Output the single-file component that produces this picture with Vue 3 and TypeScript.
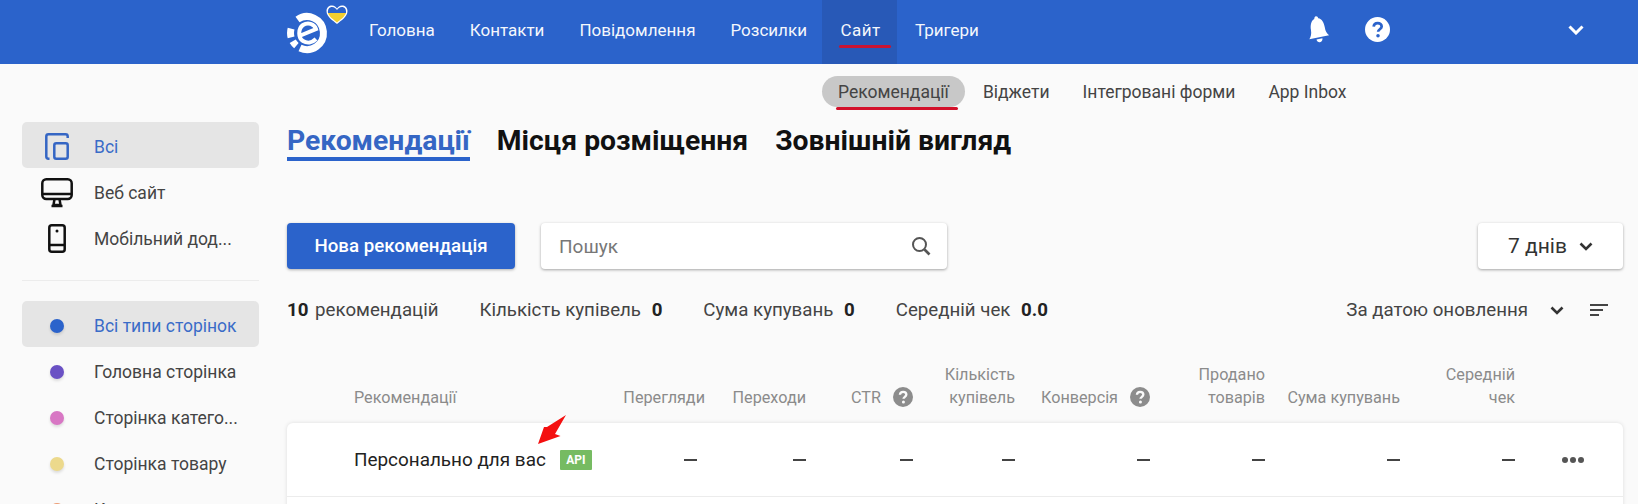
<script setup lang="ts">
const nav = ['Головна', 'Контакти', 'Повідомлення', 'Розсилки', 'Сайт', 'Тригери']
const sub = ['Рекомендації', 'Віджети', 'Інтегровані форми', 'App Inbox']
const pages = [
  { label: 'Всі типи сторінок', color: '#2b63cb', active: true },
  { label: 'Головна сторінка', color: '#6a51c4', active: false },
  { label: 'Сторінка катего...', color: '#d877c4', active: false },
  { label: 'Сторінка товару', color: '#ecd98c', active: false },
  { label: 'Кошик', color: '#ec9c74', active: false },
]
const cols = [
  { lines: ['Перегляди'], help: false },
  { lines: ['Переходи'], help: false },
  { lines: ['CTR'], help: true },
  { lines: ['Кількість', 'купівель'], help: false },
  { lines: ['Конверсія'], help: true },
  { lines: ['Продано', 'товарів'], help: false },
  { lines: ['Сума купувань'], help: false },
  { lines: ['Середній', 'чек'], help: false },
]
</script>

<template>
  <div class="page">
    <header class="top">
      <svg class="logo" width="63" height="64" viewBox="0 0 63 64">
        <g fill="none" stroke="#fff" stroke-width="7">
          <path d="M10.500 19.500 A16.500 16.500 0 1 1 13 48" />
          <path d="M4.100 28.700 A16.500 16.500 0 0 0 4.100 37.300" />
          <path d="M5.700 41.250 A16.500 16.500 0 0 0 9.400 45.600" />
        </g>
        <path d="M13.500 35.500 L29 29 C27.500 23.500 20.500 22 16 25 C11 28.500 11 38 16 41 C20 43.500 25 43 29 39" fill="none" stroke="#fff" stroke-width="4" />
        <path d="M50 24 C46 20.500 39.500 17 39.500 11 C39.500 7.500 42 5.500 45 5.500 C47.500 5.500 49 7 50 8.500 C51 7 52.500 5.500 55 5.500 C58 5.500 60.500 7.500 60.500 11 C60.500 17 54 20.500 50 24 Z" fill="#fff" />
        <path d="M41 13 C42 16.500 47 20 50 22.500 C53 20 58 16.500 59 13 Z" fill="#f3cf2f" />
        <path d="M41 13 C40.500 9 42.500 7 45 7 C47.500 7 49 8.500 50 10 C51 8.500 52.500 7 55 7 C57.500 7 59.500 9 59 13 Z" fill="#2b63cb" />
      </svg>
      <nav class="nav">
        <a v-for="n in nav" :key="n" class="nav-item" :class="{ on: n === 'Сайт' }">{{ n }}<i v-if="n === 'Сайт'" class="red-top"></i></a>
      </nav>
      <svg class="bell" width="24" height="29" viewBox="0 0 24 26" preserveAspectRatio="none">
        <g transform="rotate(-10 12 13)">
          <path d="M12 1 C13 1 14 2 14 3 C17.500 4 19 8 19 12 C19 16 20 18 22 20 L2 20 C4 18 5 16 5 12 C5 8 6.500 4 10 3 C10 2 11 1 12 1 Z" fill="#fff" />
          <path d="M9 21.500 H15 C15 23.500 13.500 24.500 12 24.500 C10.500 24.500 9 23.500 9 21.500 Z" fill="#fff" />
        </g>
      </svg>
      <svg class="help-top" width="25" height="25" viewBox="0 0 24 24">
        <circle cx="12" cy="12" r="12" fill="#fff" />
        <path d="M8.300 9.300 C8.500 7 10 5.800 12.200 5.800 C14.400 5.800 16 7.200 16 9.100 C16 11.700 12.600 11.800 12.600 14.200" fill="none" stroke="#2b63cb" stroke-width="2.600" />
        <circle cx="12.500" cy="18" r="1.700" fill="#2b63cb" />
      </svg>
      <svg class="chev-top" width="16" height="10" viewBox="0 0 16 10">
        <path d="M1.500 1.500 L8 8 L14.500 1.500" fill="none" stroke="#fff" stroke-width="3" />
      </svg>
    </header>

    <div class="subnav">
      <a v-for="s in sub" :key="s" class="sub-item" :class="{ on: s === 'Рекомендації' }">{{ s }}<i v-if="s === 'Рекомендації'" class="red-sub"></i></a>
    </div>

    <div class="body">
      <aside class="side">
        <div class="side-row active">
          <span class="ico">
            <svg width="24" height="27" viewBox="0 0 24 27" fill="none" stroke="#3566c4" stroke-width="2.500">
              <path d="M4.500 25.700 H3.500 C2.200 25.700 1.300 24.800 1.300 23.500 V3.500 C1.300 2.200 2.200 1.300 3.500 1.300 H20.500 C21.800 1.300 22.700 2.200 22.700 3.500 V5" />
              <rect x="9.300" y="10.300" width="13.400" height="15.400" rx="2" />
            </svg>
          </span>
          <span class="blue">Всі</span>
        </div>
        <div class="side-row">
          <span class="ico">
            <svg width="32" height="30" viewBox="0 0 32 30" fill="none" stroke="#111" stroke-width="2.500">
              <rect x="1.300" y="1.300" width="29.400" height="19.700" rx="4" />
              <path d="M1.500 16 H30.500" />
              <path d="M13.500 21 L12.500 27 H19.500 L18.500 21" />
              <path d="M10.500 28 H21.500" />
            </svg>
          </span>
          <span>Веб сайт</span>
        </div>
        <div class="side-row">
          <span class="ico">
            <svg width="18" height="29" viewBox="0 0 18 29" fill="none" stroke="#111" stroke-width="2.500">
              <rect x="1.300" y="1.300" width="15.400" height="26.400" rx="2.500" />
              <path d="M1 21 H17" />
              <circle cx="9" cy="7" r="1.500" fill="#111" stroke="none" />
            </svg>
          </span>
          <span>Мобільний дод...</span>
        </div>
        <div class="divider"></div>
        <div v-for="p in pages" :key="p.label" class="side-row" :class="{ active: p.active }">
          <span class="ico"><b class="dot" :style="{ background: p.color }"></b></span>
          <span :class="{ blue: p.active }">{{ p.label }}</span>
        </div>
      </aside>

      <main class="main">
        <div class="tabs">
          <span class="tab sel">Рекомендації</span>
          <span class="tab">Місця розміщення</span>
          <span class="tab">Зовнішній вигляд</span>
        </div>

        <div class="tools">
          <button class="btn">Нова рекомендація</button>
          <div class="search">
            <span>Пошук</span>
            <svg width="20" height="20" viewBox="0 0 20 20" fill="none" stroke="#555" stroke-width="2">
              <circle cx="8.500" cy="8.500" r="6.500" />
              <path d="M13.500 13.500 L18.500 18.500" stroke-width="2.600" />
            </svg>
          </div>
          <div class="range">
            <span>7 днів</span>
            <svg width="14" height="9" viewBox="0 0 14 9"><path d="M1.500 1.500 L7 7 L12.500 1.500" fill="none" stroke="#333" stroke-width="2.600" /></svg>
          </div>
        </div>

        <div class="stats">
          <span class="stat first"><b>10</b> рекомендацій</span>
          <span class="stat">Кількість купівель <b>0</b></span>
          <span class="stat">Сума купувань <b>0</b></span>
          <span class="stat">Середній чек <b>0.0</b></span>
          <span class="sort">
            <span>За датою оновлення</span>
            <svg width="14" height="9" viewBox="0 0 14 9"><path d="M1.500 1.500 L7 7 L12.500 1.500" fill="none" stroke="#333" stroke-width="2.600" /></svg>
            <svg width="18" height="13" viewBox="0 0 18 13" fill="#444"><rect width="18" height="2" /><rect y="5" width="13" height="2" /><rect y="10" width="9" height="2" /></svg>
          </span>
        </div>

        <div class="grid head">
          <div class="name-col">Рекомендації</div>
          <div v-for="c in cols" :key="c.lines[0]" class="hcell">
            <div class="hlines"><div v-for="l in c.lines" :key="l">{{ l }}</div></div>
            <svg v-if="c.help" class="help" width="20" height="20" viewBox="0 0 24 24">
              <circle cx="12" cy="12" r="12" fill="#8c8c8c" />
              <path d="M8.300 9.300 C8.500 7 10 5.800 12.200 5.800 C14.400 5.800 16 7.200 16 9.100 C16 11.700 12.600 11.800 12.600 14.200" fill="none" stroke="#fafafa" stroke-width="2.800" />
              <circle cx="12.500" cy="18" r="1.800" fill="#fafafa" />
            </svg>
          </div>
          <div></div>
        </div>

        <div class="card">
          <div class="grid row">
            <div class="name-col title">Персонально для вас <em class="api">API</em></div>
            <div v-for="c in cols" :key="c.lines[0]" class="dash"><i></i></div>
            <div class="dots"><i></i><i></i><i></i></div>
          </div>
          <svg class="arrow" width="34" height="32" viewBox="0 0 34 32">
            <path d="M30 1 L11 13 L8 13 L2 30 L24.500 22 L19 20 Z" fill="#f40f0f" />
          </svg>
        </div>
      </main>
    </div>
  </div>
</template>

<style>
html, body { margin: 0; background: #fafafa; overflow: hidden; }
</style>

<style scoped>
.page { width: 1638px; height: 504px; overflow: hidden; background: #fafafa; font-family: Roboto, "Noto Sans", sans-serif; color: #333; }
.top { height: 64px; background: #2b63cb; display: flex; align-items: center; padding-left: 287px; }
.logo { flex: none; margin-right: 1.500px; }
.nav { display: flex; height: 64px; width: 912px; margin-right: -18px; }
.nav-item { position: relative; display: flex; align-items: center; padding: 0 17.500px 5px; color: #fff; font-size: 17px; box-sizing: border-box; opacity: .95; }
.nav-item.on { background: #2859b6; margin-left: -2px; padding: 0 17px 5px 18px; letter-spacing: .5px; width: 75px; }
.red-top { position: absolute; left: 17px; right: 6px; bottom: 16px; height: 3px; background: #d3102a; border-radius: 2px; }
.bell { margin-left: 60px; margin-bottom: 6px; }
.help-top { margin-left: 35px; margin-bottom: 6px; }
.chev-top { margin-left: 178px; margin-bottom: 5px; }

.subnav { display: flex; align-items: center; height: 31px; margin-top: 12px; padding-left: 822px; gap: 18px; }
.sub-item { position: relative; height: 31px; line-height: 32px; font-size: 17.500px; color: #444; }
.sub-item.on { background: #c8c8c8; border-radius: 16px; padding: 0 16px; }
.sub-item:nth-child(3), .sub-item:nth-child(4) { margin-left: 15px; }
.red-sub { position: absolute; left: 14px; right: 7px; bottom: -3px; height: 3px; background: #d3102a; border-radius: 2px; }

.body { display: flex; }
.side { width: 237px; margin-left: 22px; margin-right: 28px; padding-top: 15px; flex: none; }
.side-row { display: flex; align-items: center; height: 46px; border-radius: 5px; font-size: 17.500px; color: #444; padding-top: 3px; box-sizing: border-box; }
.side-row.active { background: #e5e5e5; }
.blue { color: #3a6cc8; }
.ico { width: 72px; flex: none; display: flex; justify-content: center; padding-right: 2px; box-sizing: border-box; }
.dot { width: 14px; height: 14px; border-radius: 50%; display: block; box-shadow: 0 2px 3px rgba(0,0,0,.12); }
.divider { height: 1px; background: #ececec; margin: 20px 0 20px; }

.main { width: 1336px; flex: none; padding-top: 16px; }
.tabs { display: flex; gap: 27px; height: 38px; }
.tab { font-size: 28.300px; font-weight: 700; color: #111; height: 38px; line-height: 35px; box-sizing: border-box; }
.tab.sel { color: #3566c4; border-bottom: 4px solid #2b63cb; }

.tools { display: flex; align-items: center; margin-top: 62px; }
.btn { width: 228px; height: 46px; border: 0; border-radius: 4px; background: #2b63cb; color: #fff; font: 500 18.700px Roboto, sans-serif; box-shadow: 0 1px 3px rgba(0,0,0,.3); }
.search { margin-left: 26px; width: 406px; height: 46px; box-sizing: border-box; background: #fff; border-radius: 4px; box-shadow: 0 1px 3px rgba(0,0,0,.35); display: flex; align-items: center; justify-content: space-between; padding: 0 16px 0 18px; font-size: 19px; color: #777; }
.range { margin-left: auto; width: 145px; height: 46px; box-sizing: border-box; background: #fff; border-radius: 4px; box-shadow: 0 1px 3px rgba(0,0,0,.35); display: flex; align-items: center; justify-content: center; gap: 12px; font-size: 21px; color: #333; }

.stats { display: flex; align-items: center; margin-top: 29px; height: 24px; font-size: 18.700px; color: #444; }
.stat { margin-right: 41px; }
.stat b { font-weight: 700; color: #222; margin-left: 6px; }
.stat.first b { margin: 0 2px 0 0; }
.sort { margin-left: auto; display: flex; align-items: center; margin-right: 15px; }
.sort svg:nth-child(2) { margin-left: 22px; }
.sort svg:nth-child(3) { margin-left: 26px; }

.grid { display: grid; grid-template-columns: 250px 101px 101px 107px 102px 135px 115px 135px 115px 107px; }
.head { margin-top: 41px; height: 60px; padding-left: 67px; font-size: 16.200px; color: #8b8b8b; line-height: 23px; align-items: start; }
.head .name-col { margin-top: 23px; }
.hcell { display: flex; justify-content: flex-end; align-items: flex-end; height: 46px; white-space: nowrap; }
.hlines { text-align: right; }
.help { margin-left: 12px; margin-bottom: 2px; }

.card { position: relative; height: 130px; background: #fff; border-radius: 6px; box-shadow: 0 0 4px rgba(0,0,0,.12); }
.row { height: 74px; padding-left: 67px; align-items: center; border-bottom: 1px solid #ececec; box-sizing: border-box; }
.title { font-size: 18.900px; color: #222; display: flex; align-items: center; white-space: nowrap; }
.api { margin-left: 14px; width: 32px; height: 20px; background: #76bb62; color: #fff; font: 700 12px/20px Roboto, sans-serif; text-align: center; border-radius: 1px; flex: none; }
.dash { display: flex; justify-content: flex-end; }
.dash:nth-child(2) { padding-right: 8px; }
.dash i { display: block; width: 13px; height: 2px; background: #444; }
.dots { display: flex; gap: 2px; justify-content: flex-end; padding-right: 38px; }
.dots i { width: 6px; height: 6px; background: #555; border-radius: 50%; }
.arrow { position: absolute; left: 249px; top: -9px; }
</style>
